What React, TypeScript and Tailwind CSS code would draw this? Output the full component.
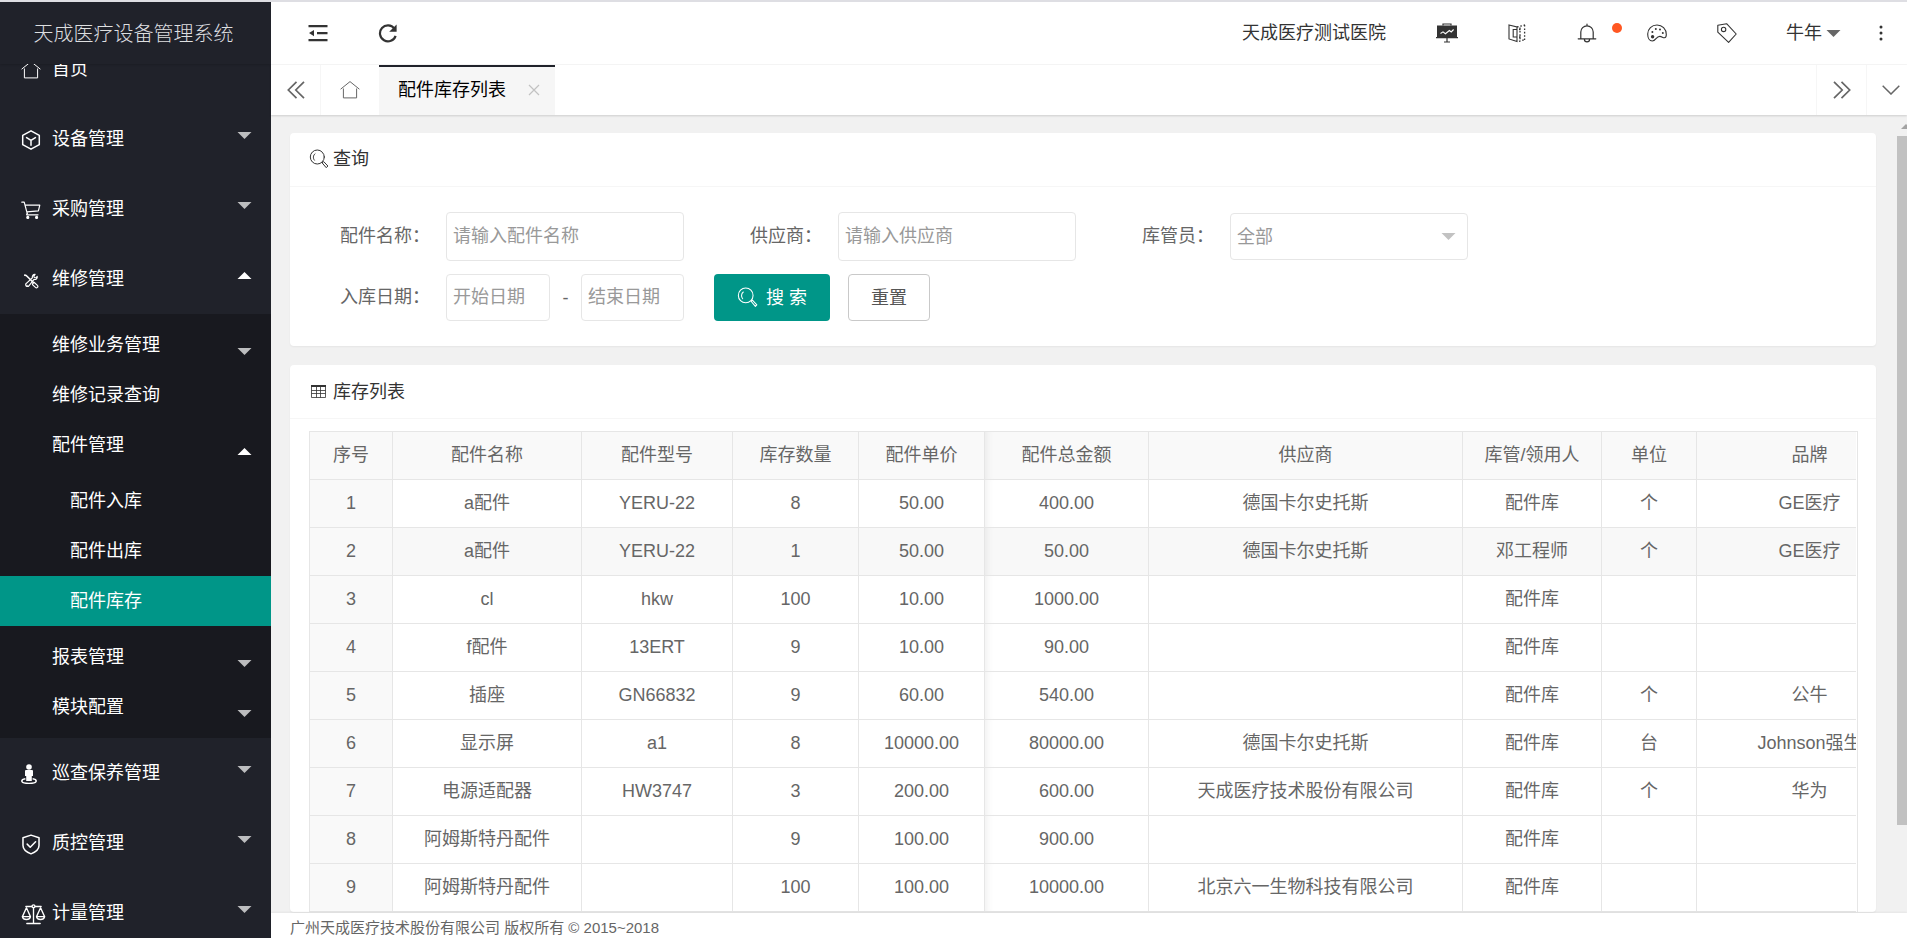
import React from "react";

type IconProps = { className?: string };

const line = {
  fill: "none",
  stroke: "currentColor",
  strokeLinecap: "round" as const,
  strokeLinejoin: "round" as const,
};

function HomeIcon({ className }: IconProps) {
  return (
    <svg viewBox="0 0 20 20" className={className} {...line} strokeLinecap="butt" strokeLinejoin="miter">
      <path d="M0.6 9.2 10 1.6l9.4 7.6M3.4 8.5v9.4h13.2V8.5" />
    </svg>
  );
}

function CubeIcon({ className }: IconProps) {
  return (
    <svg viewBox="0 0 20 20" className={className} {...line} strokeWidth="1.5">
      <path d="M10 0.8 18.3 5.3v9.4L10 19.2 1.7 14.7V5.3zM5.6 7.6 10 10.4l4.4-2.8M10 10.4v4.8" />
    </svg>
  );
}

function CartIcon({ className }: IconProps) {
  return (
    <svg viewBox="0 0 20 20" className={className} {...line} strokeWidth="1.2">
      <path d="M0.8 2.2h2.4l3 11.200M4.400 5.200h14.400L17.400 10.800 6 11.800" />
      <circle cx="6.800" cy="17.400" r="1" fill="currentColor" />
      <circle cx="15.600" cy="17.400" r="1" fill="currentColor" />
      <path d="M6.200 13.400 5.600 14.800h11.400" />
    </svg>
  );
}

function ToolsIcon({ className }: IconProps) {
  return (
    <svg viewBox="0 0 18 18" className={className} {...line}>
      <path strokeWidth="1.8" d="M2 2.4l1.6.4L12 11" />
      <path strokeWidth="1.3" d="M11 11.6l1.4-1.2 3.8 3.6a1.5 1.5 0 0 1-2.2 2.2L10.6 13z" />
      <path strokeWidth="1.3" d="M10.6 5.4c-.6-2 .8-4 3-3.8L12.2 3.4l.4 1.6 1.8.4 1.6-1.6c.5 2.2-1.4 4-3.6 3.4L6.6 14.4a2 2 0 1 1-2.8-2.8z" />
      <circle cx="4.6" cy="14" r="0.7" fill="currentColor" stroke="none" />
    </svg>
  );
}

function PersonIcon({ className }: IconProps) {
  return (
    <svg viewBox="0 0 16 20" className={className} fill="currentColor">
      <circle cx="8" cy="3" r="2.8" />
      <path d="M5 6h6q1 0 1 1v5h-1.2v5H5.200v-5H4V7q0-1 1-1z" />
      <path d="M4.4 14.800C1.900 15.200.8 16 .8 17c0 1.400 3 2.400 7.200 2.400s7.200-1 7.200-2.400c0-1-1.100-1.800-3.600-2.200" fill="none" stroke="currentColor" strokeWidth="1.5" />
    </svg>
  );
}

function ShieldIcon({ className }: IconProps) {
  return (
    <svg viewBox="0 0 20 22" className={className} {...line} strokeWidth="1.6">
      <path d="M10 1.200 18.400 4v8c0 4-3.400 6.800-8.400 8.800C5 18.800 1.600 16 1.600 12V4z" />
      <path d="M6 10.600l3.200 3.200 5.600-5.600" />
    </svg>
  );
}

function ScaleIcon({ className }: IconProps) {
  return (
    <svg viewBox="0 0 26 22" className={className} {...line} strokeWidth="1.400">
      <path d="M5 2.600h16M13 2.600v17M6 20.400h14" />
      <circle cx="13" cy="2.400" r="1.500" fill="#20222a" />
      <path d="M5.600 4 1.400 13.200h8.400zM20.400 4l-4.200 9.200h8.400z" />
      <path d="M1.400 13.400a4.300 3.600 0 0 0 8.400 0M16.200 13.400a4.300 3.600 0 0 0 8.400 0" />
    </svg>
  );
}

function ShrinkIcon({ className }: IconProps) {
  return (
    <svg viewBox="0 0 20 20" className={className} fill="currentColor">
      <path d="M0.500 2h19v2.200h-19zM9 9h10.500v2.200H9zM0.500 16h19v2.200h-19zM1 10.100 6 7v6.200z" />
    </svg>
  );
}

function RefreshIcon({ className }: IconProps) {
  return (
    <svg viewBox="0 0 20 20" className={className} fill="none" stroke="currentColor" strokeWidth="2.200">
      <path d="M16.400 5.600A8 8 0 1 0 17.600 12.800" />
      <path d="M18.600 1.400v7.400h-7.400z" fill="currentColor" stroke="none" />
    </svg>
  );
}

function BoardIcon({ className }: IconProps) {
  return (
    <svg viewBox="0 0 22 20" className={className} fill="none" stroke="currentColor">
      <path d="M7 2.500V1h8v1.500M11 14v5M8 19h6" strokeWidth="1.200" />
      <path d="M1 2.500h20v12H1zM0 14h22v1.200H0z" fill="currentColor" stroke="none" />
      <path d="M4.500 10.500 7 8.900l2.400 1.800 4-3.200 1.800 1.400L17.600 6.500" stroke="#fff" strokeWidth="1.100" />
    </svg>
  );
}

function MirrorIcon({ className }: IconProps) {
  return (
    <svg viewBox="0 0 20 20" className={className} fill="none" stroke="currentColor" strokeWidth="1.100">
      <path d="M2 2l8 2v14.500l-8-2.600zM10 6.500H6.200v7.500H10" />
      <path d="M13 4.500v14M17.600 2v15M10 4l8-2M12 18.400l6-2M12 6.500h2M12 14h2" strokeDasharray="1.600 1.800" strokeWidth="1.300" />
    </svg>
  );
}

function BellIcon({ className }: IconProps) {
  return (
    <svg viewBox="0 0 20 20" className={className} {...line} strokeWidth="1.200">
      <path d="M3.800 15.600V9a6.200 6.200 0 0 1 12.400 0v6.600M1.200 15.800h17.600M10 2.600V1.200M7.400 16.200a2.600 2.600 0 0 0 5.200 0" />
    </svg>
  );
}

function PaletteIcon({ className }: IconProps) {
  return (
    <svg viewBox="0 0 20 18" className={className} {...line} strokeWidth="1.100">
      <path d="M10 1C4.800 1 .7 4.800.7 10c0 4 1.800 7 4.600 7 3.600 0 3.800-4.600 7.400-4.600 2.400 0 2.800 1.400 4.800 1.400 1.200 0 1.800-1.400 1.800-3.200C19.300 5 15.200 1 10 1z" />
      <circle cx="5.600" cy="12.800" r="1.700" fill="currentColor" stroke="none" />
      <circle cx="5.400" cy="8" r="1" fill="currentColor" stroke="none" />
      <circle cx="8.800" cy="5" r="1" fill="currentColor" stroke="none" />
      <circle cx="13" cy="5.400" r="1" fill="currentColor" stroke="none" />
      <circle cx="15.800" cy="9" r="1" fill="currentColor" stroke="none" />
    </svg>
  );
}

function TagIcon({ className }: IconProps) {
  return (
    <svg viewBox="0 0 20 20" className={className} {...line} strokeWidth="1.100">
      <path d="M0.800 2.200 9.600.7 19.200 11l-7.600 8.300L.8 9.200z" />
      <circle cx="6.600" cy="6.400" r="2.200" />
    </svg>
  );
}

function DotsIcon({ className }: IconProps) {
  return (
    <svg viewBox="0 0 4 16" className={className} fill="currentColor">
      <circle cx="2" cy="2" r="1.500" />
      <circle cx="2" cy="8" r="1.500" />
      <circle cx="2" cy="14" r="1.500" />
    </svg>
  );
}

function DoubleChevron({ className }: IconProps) {
  return (
    <svg viewBox="0 0 18 18" className={className} fill="none" stroke="currentColor" strokeWidth="1.700">
      <path d="M9.500.8 1.300 9l8.200 8.200M17 .8 8.800 9l8.200 8.200" />
    </svg>
  );
}

function ChevronDown({ className }: IconProps) {
  return (
    <svg viewBox="0 0 18 10" className={className} fill="none" stroke="currentColor" strokeWidth="1.500">
      <path d="M.7.700 9 9l8.300-8.300" />
    </svg>
  );
}

function CloseIcon({ className }: IconProps) {
  return (
    <svg viewBox="0 0 12 12" className={className} fill="none" stroke="currentColor" strokeWidth="1.200">
      <path d="M1 1l10 10M11 1 1 11" />
    </svg>
  );
}

function SearchIcon({ className }: IconProps) {
  return (
    <svg viewBox="0 0 20 20" className={className} {...line}>
      <circle cx="8.300" cy="8" r="7" />
      <path d="M5.400 11.200C3.800 9.400 4 6.200 6 4.800" />
      <path d="M13.400 13.600l1.300-1 4.200 4.400-1.400 1.400z" />
    </svg>
  );
}

function GridIcon({ className }: IconProps) {
  return (
    <svg viewBox="0 0 15 13" className={className} fill="none" stroke="currentColor">
      <path d="M.5 1v11.500h14V1M.5 5.500h14M.5 8.500h14M5.500 2v10.500M9.500 2v10.500" strokeOpacity="0.800" />
      <path d="M0 1h15" strokeWidth="2" />
    </svg>
  );
}

function Caret({ up, className }: { up?: boolean; className?: string }) {
  return (
    <svg viewBox="0 0 14 7" className={className} fill="currentColor">
      <path d={up ? "M0 7 7 0l7 7z" : "M0 0h14L7 7z"} />
    </svg>
  );
}

type Section = { label: string; icon: React.ReactNode; caret?: "up" | "down" };

function NavSection({ label, icon, caret }: Section) {
  return (
    <button type="button" className="flex h-[70px] w-full shrink-0 items-center pr-[19px] text-left text-lg text-white">
      <span className="flex w-[52px] shrink-0 pl-[21px] pt-0.5">{icon}</span>
      <span className="flex-1">{label}</span>
      {caret && (
        <Caret up={caret === "up"} className={caret === "up" ? "mb-2 h-[7px] w-[15px] text-white" : "mb-2 h-[7px] w-[15px] text-[#bcbdbf]"} />
      )}
    </button>
  );
}

function SubItem({ label, caret }: { label: string; caret?: "up" | "down" }) {
  return (
    <button type="button" className="flex h-[50px] w-full items-center pl-[52px] pr-[19px] text-left text-lg text-white">
      <span className="flex-1">{label}</span>
      {caret && (
        <Caret up={caret === "up"} className={caret === "up" ? "mt-3 h-[7px] w-[15px] text-white" : "mt-3 h-[7px] w-[15px] text-[#bcbdbf]"} />
      )}
    </button>
  );
}

function LeafItem({ label, active }: { label: string; active?: boolean }) {
  return (
    <a
      href="#"
      className={
        active
          ? "flex h-[50px] items-center bg-[#009688] pl-[70px] text-lg text-white"
          : "flex h-[50px] items-center pl-[70px] text-lg text-white"
      }
    >
      {label}
    </a>
  );
}

function Sidebar() {
  return (
    <aside className="flex w-[271px] shrink-0 flex-col bg-[#20222a]">
      <h1 className="flex h-[62px] shrink-0 items-center justify-center pr-1 pt-0.5 text-xl font-light text-[#dedfe0] shadow-[0_1px_2px_rgba(0,0,0,0.15)]">
        天成医疗设备管理系统
      </h1>
      <nav className="min-h-0 flex-1 overflow-hidden">
        <div className="-mt-[30px] flex flex-col">
          <NavSection label="首页" icon={<HomeIcon className="size-5" />} />
          <NavSection label="设备管理" icon={<CubeIcon className="size-5" />} caret="down" />
          <NavSection label="采购管理" icon={<CartIcon className="size-5" />} caret="down" />
          <NavSection label="维修管理" icon={<ToolsIcon className="ml-0.5 mt-0.5 size-4" />} caret="up" />
          <div className="bg-[#18191f] py-1.5">
            <SubItem label="维修业务管理" caret="down" />
            <SubItem label="维修记录查询" />
            <SubItem label="配件管理" caret="up" />
            <div className="py-1.5">
              <LeafItem label="配件入库" />
              <LeafItem label="配件出库" />
              <LeafItem label="配件库存" active />
            </div>
            <SubItem label="报表管理" caret="down" />
            <SubItem label="模块配置" caret="down" />
          </div>
          <NavSection label="巡查保养管理" icon={<PersonIcon className="h-5 w-4" />} caret="down" />
          <NavSection label="质控管理" icon={<ShieldIcon className="h-[21px] w-5" />} caret="down" />
          <NavSection label="计量管理" icon={<ScaleIcon className="h-[21px] w-[25px]" />} caret="down" />
        </div>
      </nav>
    </aside>
  );
}

function HeaderButton({ label, children }: { label: string; children: React.ReactNode }) {
  return (
    <button type="button" aria-label={label} className="relative flex h-full w-[70px] items-center justify-center">
      {children}
    </button>
  );
}

function Header() {
  return (
    <header className="flex h-[63px] shrink-0 items-center border-b border-[#f6f6f6] bg-white text-lg text-[#333]">
      <div className="flex h-full pl-3">
        <HeaderButton label="收起菜单">
          <ShrinkIcon className="size-5" />
        </HeaderButton>
        <HeaderButton label="刷新">
          <RefreshIcon className="size-5" />
        </HeaderButton>
      </div>
      <div className="ml-auto flex h-full items-center">
        <span className="pr-[26px]">天成医疗测试医院</span>
        <HeaderButton label="数据看板">
          <BoardIcon className="h-5 w-[22px]" />
        </HeaderButton>
        <HeaderButton label="分屏">
          <MirrorIcon className="size-5" />
        </HeaderButton>
        <HeaderButton label="消息">
          <BellIcon className="size-5" />
          <span className="absolute right-0 top-[21px] size-2.5 rounded-full bg-[#ff5722]" />
        </HeaderButton>
        <HeaderButton label="主题">
          <PaletteIcon className="h-[18px] w-5" />
        </HeaderButton>
        <HeaderButton label="便签">
          <TagIcon className="size-5" />
        </HeaderButton>
        <button type="button" className="flex h-full items-center gap-1 pl-6 pr-3.5">
          牛年
          <Caret className="h-[7px] w-[15px] text-[#666]" />
        </button>
        <button type="button" aria-label="更多" className="flex h-full w-[52px] items-center justify-center">
          <DotsIcon className="h-4 w-1" />
        </button>
      </div>
    </header>
  );
}

function TabBar() {
  return (
    <div className="z-10 flex h-[50px] shrink-0 bg-white text-lg text-[#666] shadow-[0_1px_2px_rgba(0,0,0,0.15)]">
      <button type="button" aria-label="向左" className="flex w-[50px] items-center justify-center border-r border-[#f6f6f6]">
        <DoubleChevron className="size-[18px]" />
      </button>
      <button type="button" aria-label="首页" className="flex w-[58px] items-center justify-center">
        <HomeIcon className="size-5" />
      </button>
      <div className="flex items-center gap-[22px] border-t-2 border-[#20222a] bg-[#f6f6f6] pb-0.5 pl-[19px] pr-[15px] text-black">
        <span>配件库存列表</span>
        <button type="button" aria-label="关闭" className="text-[#c2c2c2]">
          <CloseIcon className="size-3" />
        </button>
      </div>
      <button type="button" aria-label="向右" className="ml-auto flex w-[50px] items-center justify-center border-l border-[#f6f6f6]">
        <DoubleChevron className="size-[18px] rotate-180" />
      </button>
      <button type="button" aria-label="页签操作" className="flex w-[41px] items-center justify-end border-l border-[#f6f6f6] pr-[7px]">
        <ChevronDown className="h-2.5 w-[18px]" />
      </button>
    </div>
  );
}

function Field({ id, label, children }: { id: string; label: string; children: React.ReactNode }) {
  return (
    <div className="flex items-center gap-4">
      <label htmlFor={id} className="w-[120px] pb-0.5 text-right">
        {label}
      </label>
      {children}
    </div>
  );
}

function SearchCard() {
  return (
    <section className="rounded-sm bg-white shadow-[0_1px_2px_rgba(0,0,0,0.05)]">
      <h2 className="flex h-[54px] items-center gap-1 border-b border-[#f6f6f6] px-[19px] pb-0.5 text-lg text-[#333]">
        <SearchIcon className="size-5" />
        查询
      </h2>
      <form className="flex flex-col gap-[13px] px-5 py-[25px] text-lg text-[#666]">
        <div className="flex flex-wrap items-center gap-x-[18px]">
          <Field id="part" label="配件名称：">
            <input id="part" placeholder="请输入配件名称" className="h-[49px] w-[238px] rounded-sm border border-[#e6e6e6] px-1.5 placeholder:text-[#999]" />
          </Field>
          <Field id="supplier" label="供应商：">
            <input id="supplier" placeholder="请输入供应商" className="h-[49px] w-[238px] rounded-sm border border-[#e6e6e6] px-1.5 placeholder:text-[#999]" />
          </Field>
          <Field id="keeper" label="库管员：">
            <span className="relative flex items-center">
              <select id="keeper" className="h-[47px] w-[238px] appearance-none rounded-sm border border-[#e6e6e6] bg-white px-1.5 text-[#999]">
                <option>全部</option>
              </select>
              <Caret className="pointer-events-none absolute right-3 h-[7px] w-[15px] text-[#c2c2c2]" />
            </span>
          </Field>
        </div>
        <div className="flex flex-wrap items-center">
          <Field id="start" label="入库日期：">
            <span className="flex items-center">
              <input id="start" placeholder="开始日期" className="h-[47px] w-[104px] rounded-sm border border-[#e6e6e6] px-1.5 placeholder:text-[#999]" />
              <span className="w-[31px] text-center">-</span>
              <input aria-label="结束日期" placeholder="结束日期" className="h-[47px] w-[103px] rounded-sm border border-[#e6e6e6] px-1.5 placeholder:text-[#999]" />
            </span>
          </Field>
          <button type="button" className="ml-[30px] flex h-[47px] w-[116px] items-center justify-center gap-2 rounded-sm bg-[#009688] text-white">
            <SearchIcon className="size-[21px]" />
            搜 索
          </button>
          <button type="button" className="ml-[18px] h-[47px] w-[82px] rounded-sm border border-[#c9c9c9] text-[#555]">
            重置
          </button>
        </div>
      </form>
    </section>
  );
}

const heads = ["序号", "配件名称", "配件型号", "库存数量", "配件单价", "配件总金额", "供应商", "库管/领用人", "单位", "品牌"];

const rows: string[][] = [
  ["1", "a配件", "YERU-22", "8", "50.00", "400.00", "德国卡尔史托斯", "配件库", "个", "GE医疗"],
  ["2", "a配件", "YERU-22", "1", "50.00", "50.00", "德国卡尔史托斯", "邓工程师", "个", "GE医疗"],
  ["3", "cl", "hkw", "100", "10.00", "1000.00", "", "配件库", "", ""],
  ["4", "f配件", "13ERT", "9", "10.00", "90.00", "", "配件库", "", ""],
  ["5", "插座", "GN66832", "9", "60.00", "540.00", "", "配件库", "个", "公牛"],
  ["6", "显示屏", "a1", "8", "10000.00", "80000.00", "德国卡尔史托斯", "配件库", "台", "Johnson强生"],
  ["7", "电源适配器", "HW3747", "3", "200.00", "600.00", "天成医疗技术股份有限公司", "配件库", "个", "华为"],
  ["8", "阿姆斯特丹配件", "", "9", "100.00", "900.00", "", "配件库", "", ""],
  ["9", "阿姆斯特丹配件", "", "100", "100.00", "10000.00", "北京六一生物科技有限公司", "配件库", "", ""],
];

const cell = "h-12 whitespace-nowrap border-b border-r border-[#e6e6e6] p-0 pb-0.5 text-center font-normal";
const edge = " shadow-[inset_9px_0_8px_-8px_rgba(0,0,0,0.08)]";

function StockCard() {
  return (
    <section className="rounded-sm bg-white shadow-[0_1px_2px_rgba(0,0,0,0.05)]">
      <h2 className="flex h-[54px] items-center gap-[7px] border-b border-[#f6f6f6] pl-[21px] text-lg text-[#333]">
        <GridIcon className="h-[13px] w-[15px]" />
        库存列表
      </h2>
      <div className="pl-[19px] pr-[18px] pt-3">
        <div className="overflow-hidden border border-b-0 border-[#e6e6e6] pr-px">
          <div className="overflow-hidden">
            <table className="w-[1613px] table-fixed border-separate border-spacing-0 text-lg text-[#666]">
              <colgroup>
                <col className="w-[83px]" />
                <col className="w-[189px]" />
                <col className="w-[151px]" />
                <col className="w-[126px]" />
                <col className="w-[126px]" />
                <col className="w-[164px]" />
                <col className="w-[314px]" />
                <col className="w-[139px]" />
                <col className="w-[95px]" />
                <col className="w-[226px]" />
              </colgroup>
              <thead>
                <tr className="bg-[#f9f9f9]">
                  {heads.map((h, i) => (
                    <th key={h} className={i === 5 ? cell + edge : cell}>
                      {h}
                    </th>
                  ))}
                </tr>
              </thead>
              <tbody>
                {rows.map((r, ri) => (
                  <tr key={r[0]} className={ri === 1 ? "bg-[#f8f8f8]" : "bg-white"}>
                    {r.map((v, i) => (
                      <td key={i} className={i === 0 ? cell + " bg-[#f9f9f9]" : i === 5 ? cell + edge : cell}>
                        {v}
                      </td>
                    ))}
                  </tr>
                ))}
              </tbody>
            </table>
          </div>
        </div>
      </div>
    </section>
  );
}

function ScrollTrack() {
  return (
    <div className="flex w-2.5 shrink-0 flex-col overflow-hidden bg-[#f1f1f1] pt-[9px]" aria-hidden="true">
      <svg viewBox="0 0 10 5" className="ml-1 h-[5px] w-2.5 shrink-0 text-[#a3a3a3]" fill="currentColor">
        <path d="M5 0l5 5H0z" />
      </svg>
      <div className="mt-[7px] mb-[88px] flex-1 bg-[#c1c1c1]" />
    </div>
  );
}

export default function App() {
  return (
    <div className="flex h-screen flex-col overflow-hidden border-t-2 border-[#dedee3] bg-[#f1f1f1] font-['Liberation_Sans','Noto_Sans_CJK_SC',sans-serif]">
      <div className="flex min-h-0 flex-1">
        <Sidebar />
        <div className="flex min-w-0 flex-1 flex-col">
          <Header />
          <TabBar />
          <div className="flex min-h-0 flex-1">
            <main className="flex min-w-0 flex-1 flex-col gap-[19px] overflow-hidden pl-[19px] pr-[21px] pt-[18px]">
              <SearchCard />
              <StockCard />
            </main>
            <ScrollTrack />
          </div>
          <footer className="z-10 flex h-[25px] shrink-0 items-center bg-white pl-[19px] pt-1.5 text-[15px] text-[#666] shadow-[0_-1px_2px_rgba(0,0,0,0.05)]">
            广州天成医疗技术股份有限公司 版权所有 © 2015~2018
          </footer>
        </div>
      </div>
    </div>
  );
}
